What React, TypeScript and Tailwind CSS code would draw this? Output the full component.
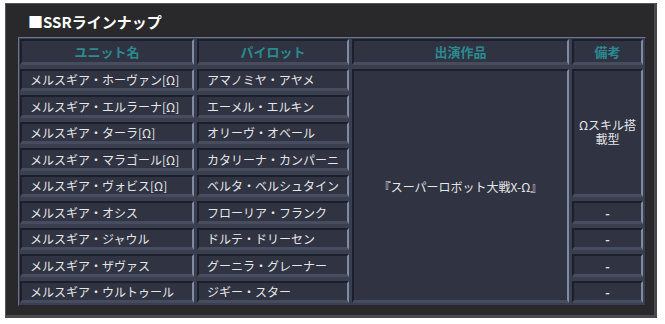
import { Fragment } from "react";

const units = [
  { unit: "メルスギア・ホーヴァン[Ω]", pilot: "アマノミヤ・アヤメ" },
  { unit: "メルスギア・エルラーナ[Ω]", pilot: "エーメル・エルキン" },
  { unit: "メルスギア・ターラ[Ω]", pilot: "オリーヴ・オベール" },
  { unit: "メルスギア・マラゴール[Ω]", pilot: "カタリーナ・カンパーニ" },
  { unit: "メルスギア・ヴォビス[Ω]", pilot: "ベルタ・ベルシュタイン" },
  { unit: "メルスギア・オシス", pilot: "フローリア・フランク" },
  { unit: "メルスギア・ジャウル", pilot: "ドルテ・ドリーセン" },
  { unit: "メルスギア・ザヴァス", pilot: "グーニラ・グレーナー" },
  { unit: "メルスギア・ウルトゥール", pilot: "ジギー・スター" },
];

const cell =
  "bg-[#2f3342] border-t-2 border-l-2 border-r-2 border-b-[3px] border-t-[#1c1f29] border-l-[#1c1f29] border-r-[#818aa3] border-b-[#474d5f] flex items-center";

export default function App() {
  return (
    <div className="bg-white w-[665px] h-[324px] pt-[3px] pl-[5px] font-['Noto_Sans_CJK_JP',sans-serif]">
      <div className="w-[652px] h-[315px] bg-[#29292c] border border-[#56565a] border-r-[3px] border-b-[3px] border-r-[#4a4a4e] border-b-[#4a4a4e] pt-[8px]">
        {/* タイトル */}
        <h2 className="pl-[22px] h-[20px] leading-[20px] text-[15px] font-bold text-white">
          ■SSRラインナップ
        </h2>

        {/* 表 */}
        <div className="ml-[12px] mt-[5px] w-[628px] bg-[#3a3f50] border-l border-t border-[#6c7490] border-r border-r-[#23262f] border-b border-b-[#23262f] pl-[1px] pt-[1px] pb-[2px] pr-[2px]">
          <div className="grid grid-cols-[174px_152px_217px_71px] grid-rows-[25.5px_repeat(9,22.5px)] gap-x-[3px] gap-y-[4px] text-[12px] text-[#e6e6e6]">
            <div className={`${cell} justify-center font-bold text-[13px] text-[#2b8b90]`}>ユニット名</div>
            <div className={`${cell} justify-center font-bold text-[13px] text-[#2b8b90]`}>パイロット</div>
            <div className={`${cell} justify-center font-bold text-[13px] text-[#2b8b90]`}>出演作品</div>
            <div className={`${cell} justify-center font-bold text-[13px] text-[#2b8b90]`}>備考</div>

            {units.map((u, i) => (
              <Fragment key={i}>
                <div className={`${cell} pl-[8px] pt-[2px] whitespace-nowrap`} style={{ gridColumn: 1, gridRow: i + 2 }}>
                  {u.unit}
                </div>
                <div className={`${cell} pl-[8px] pt-[2px] whitespace-nowrap`} style={{ gridColumn: 2, gridRow: i + 2 }}>
                  {u.pilot}
                </div>
              </Fragment>
            ))}

            <div className={`${cell} justify-center pt-[4px] col-start-3 row-start-2 row-span-9`}>
              『スーパーロボット大戦X-Ω』
            </div>
            <div className={`${cell} justify-center text-center leading-[14px] px-[4px] col-start-4 row-start-2 row-span-5`}>
              Ωスキル搭載型
            </div>
            {[7, 8, 9, 10].map((r) => (
              <div key={r} className={`${cell} justify-center pt-[2px] font-bold`} style={{ gridColumn: 4, gridRow: r }}>
                -
              </div>
            ))}
          </div>
        </div>
      </div>
    </div>
  );
}
